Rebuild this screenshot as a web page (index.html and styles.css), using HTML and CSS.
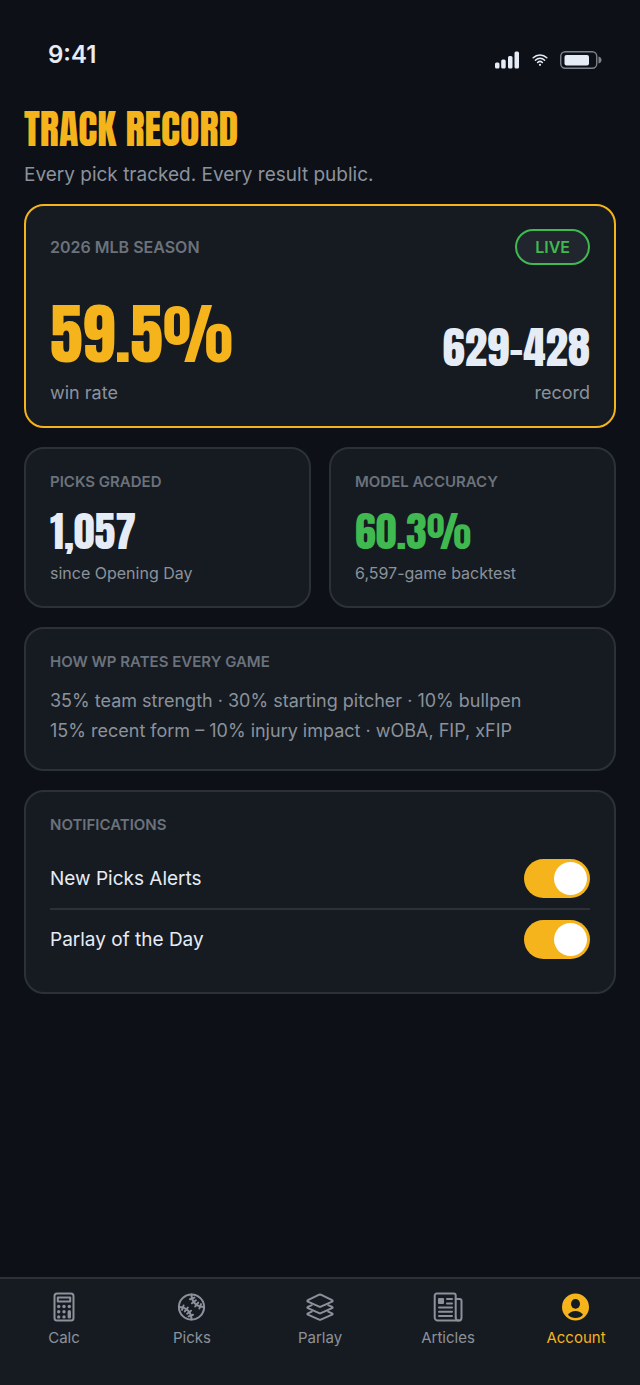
FILE: index.html
```html
<!DOCTYPE html>
<html lang="en">
<head>
    <meta charset="UTF-8">
    <meta name="viewport" content="width=device-width, initial-scale=1.0">
    <title>Track Record</title>
    <link rel="stylesheet" href="styles.css">
</head>
<body>

    <!-- Status bar -->
    <div class="status-bar">
        <span class="time">9:41</span>
        <div class="status-icons">
            <svg class="signal" viewBox="0 0 26 18" fill="currentColor" aria-hidden="true">
                <rect x="1" y="11.500" width="4.500" height="6" rx="1.500"/>
                <rect x="7.200" y="8.500" width="4.500" height="9" rx="1.500"/>
                <rect x="14" y="5" width="4.500" height="12.500" rx="1.500"/>
                <rect x="20.500" y="0.500" width="4.500" height="17" rx="1.500"/>
            </svg>
            <svg class="wifi" viewBox="0 0 16 14" fill="none" stroke="currentColor" stroke-width="1.5" stroke-linecap="round" aria-hidden="true">
                <path d="M1.2 4.7C5 1 11 1 14.8 4.7"/>
                <path d="M3.4 7.2C6 4.7 10 4.7 12.6 7.2"/>
                <path d="M5.6 9.5C7 8.2 9 8.2 10.4 9.5"/>
                <circle cx="8" cy="11.8" r="1.1" fill="currentColor" stroke="none"/>
            </svg>
            <svg class="battery" viewBox="0 0 42 18" aria-hidden="true">
                <rect x="0.75" y="0.75" width="36" height="16.5" rx="4.5" fill="none" stroke="#7d828b" stroke-width="1.4"/>
                <rect x="4.500" y="4" width="24.500" height="10.500" rx="2" fill="currentColor"/>
                <path d="M38.500 5.500c4 .8 4 6.200 0 7z" fill="#7d828b"/>
            </svg>
        </div>
    </div>

    <main class="content">
        <header>
            <h1>TRACK RECORD</h1>
            <p class="subtitle">Every pick tracked. Every result public.</p>
        </header>

        <section class="card card-hero">
            <div class="hero-top">
                <h2 class="season">2026 MLB SEASON</h2>
                <span class="live-pill">LIVE</span>
            </div>
            <div class="hero-stats">
                <div>
                    <div class="win-rate">59.5%</div>
                    <p class="caption">win rate</p>
                </div>
                <div class="hero-right">
                    <div class="record">629-428</div>
                    <p class="caption">record</p>
                </div>
            </div>
        </section>

        <div class="stat-grid">
            <section class="card">
                <h2 class="label">PICKS GRADED</h2>
                <div class="stat-value">1,057</div>
                <p class="stat-note">since Opening Day</p>
            </section>
            <section class="card">
                <h2 class="label">MODEL ACCURACY</h2>
                <div class="stat-value green">60.3%</div>
                <p class="stat-note">6,597-game backtest</p>
            </section>
        </div>

        <section class="card">
            <h2 class="label">HOW WP RATES EVERY GAME</h2>
            <p class="factors">
                35% team strength · 30% starting pitcher · 10% bullpen<br>
                15% recent form – 10% injury impact · wOBA, FIP, xFIP
            </p>
        </section>

        <section class="card">
            <h2 class="label">NOTIFICATIONS</h2>
            <div class="setting">
                <label for="new-picks">New Picks Alerts</label>
                <input type="checkbox" class="toggle" id="new-picks" checked>
            </div>
            <div class="setting">
                <label for="parlay-day">Parlay of the Day</label>
                <input type="checkbox" class="toggle" id="parlay-day" checked>
            </div>
        </section>
    </main>

    <!-- Bottom tabs -->
    <nav class="tab-bar">
        <a href="#calc" class="tab">
            <svg viewBox="0 0 30 30" fill="none" stroke="currentColor" stroke-width="2" stroke-linejoin="round" aria-hidden="true">
                <rect x="5.500" y="1.500" width="19" height="27" rx="2.500"/>
                <rect x="8.800" y="5.500" width="12.400" height="4"/>
                <g fill="currentColor" stroke="none">
                    <circle cx="9.700" cy="14.500" r="1.700"/>
                    <circle cx="15" cy="14.500" r="1.700"/>
                    <circle cx="20.300" cy="14.500" r="1.700"/>
                    <circle cx="9.700" cy="19.700" r="1.700"/>
                    <circle cx="15" cy="19.700" r="1.700"/>
                    <circle cx="9.700" cy="24.900" r="1.700"/>
                    <circle cx="15" cy="24.900" r="1.700"/>
                    <rect x="18.600" y="18" width="3.400" height="8.600" rx="1.700"/>
                </g>
            </svg>
            <span>Calc</span>
        </a>
        <a href="#picks" class="tab">
            <svg viewBox="0 0 30 30" fill="none" stroke="currentColor" stroke-width="2" stroke-linecap="round" aria-hidden="true">
                <circle cx="14.500" cy="15" r="12.600"/>
                <path d="M14.500 2.400C14.500 9.800 19.700 15 27.100 15"/>
                <path d="M1.900 15C9.300 15 14.500 20.200 14.500 27.600"/>
                <path d="M13 7.200l4.400-1.600M15 11.300l3.900-3M18.200 14.500l3-3.900M22.400 16.500l1.600-4.400"/>
                <path d="M5 17.900l1.600-4.400M7.800 19.400l3-3.900M10.100 21.700l3.900-3M11.600 24.400l4.400-1.600"/>
            </svg>
            <span>Picks</span>
        </a>
        <a href="#parlay" class="tab">
            <svg viewBox="0 0 30 30" fill="none" stroke="currentColor" stroke-width="2" stroke-linejoin="round" stroke-linecap="round" aria-hidden="true">
                <path d="M14.200 2.700L2.900 8.200c-.7.400-.7 1 0 1.400l11.300 5.100c.5.200 1.100.2 1.600 0l11.300-5.100c.7-.4.700-1 0-1.400L15.800 2.700c-.5-.2-1.100-.2-1.600 0z"/>
                <path d="M6.800 13.200l-3.900 1.700c-.7.300-.7 1 0 1.300l11.300 5c.5.200 1.100.2 1.600 0l11.300-5c.7-.3.700-1 0-1.300l-3.900-1.700"/>
                <path d="M6.800 19.600l-3.900 1.700c-.7.300-.7 1 0 1.300l11.300 5c.5.200 1.100.2 1.600 0l11.300-5c.7-.3.700-1 0-1.300l-3.900-1.700"/>
            </svg>
            <span>Parlay</span>
        </a>
        <a href="#articles" class="tab">
            <svg viewBox="0 0 30 30" fill="none" stroke="currentColor" stroke-width="2" stroke-linejoin="round" stroke-linecap="round" aria-hidden="true">
                <path d="M22.700 25.500V3.500a2 2 0 0 0-2-2H3.700a2 2 0 0 0-2 2v22a3 3 0 0 0 3 3h21"/>
                <path d="M22.700 7h3.800a2 2 0 0 1 2 2v16.700a2.800 2.800 0 0 1-5.800 0"/>
                <path d="M14 7h5M14 11.500h5M6 15.500h13M6 19.700h13M6 24h13"/>
                <rect x="5" y="6" width="6" height="6" rx="1" fill="currentColor" stroke="none"/>
            </svg>
            <span>Articles</span>
        </a>
        <a href="#account" class="tab active" aria-current="page">
            <svg viewBox="0 0 30 30" aria-hidden="true">
                <circle cx="14.500" cy="15" r="13.500" fill="currentColor"/>
                <ellipse cx="14.500" cy="11.900" rx="4.500" ry="4.800" fill="#161b21"/>
                <path d="M7 22.800C8.500 20.200 11.400 18.900 14.500 18.900S20.500 20.200 22 22.800C20 25 17.400 26 14.500 26S9 25 7 22.800z" fill="#161b21"/>
            </svg>
            <span>Account</span>
        </a>
    </nav>

</body>
</html>
```

FILE: styles.css
```css
* {
    margin: 0;
    padding: 0;
    box-sizing: border-box;
}

:root {
    --bg: #0d1017;
    --card: #161b21;
    --border: #2c3138;
    --gold: #f5b31c;
    --green: #3fb950;
    --text: #e6ecf5;
    --muted: #8b929c;
    --dim: #6b727c;
    --display: Anton, "Liberation Sans Narrow", sans-serif;
}

body {
    font-family: Inter, sans-serif;
    background: var(--bg);
    color: var(--text);
    min-height: 100vh;
    display: flex;
    flex-direction: column;
}

/* Status bar */
.status-bar {
    display: flex;
    justify-content: space-between;
    align-items: center;
    padding: 40px 38px 0 48px;
}

.time {
    font-size: 24px;
    line-height: 30px;
    font-weight: 600;
}

.status-icons {
    display: flex;
    align-items: center;
    gap: 12px;
    padding-top: 10px;
}

.signal { width: 26px; height: 18px; }
.wifi { width: 16px; height: 14px; }
.battery { width: 42px; height: 18px; }

/* Content */
.content {
    flex: 1;
    padding: 34px 24px 24px;
    display: flex;
    flex-direction: column;
    gap: 19px;
}

h1 {
    font-family: var(--display);
    font-size: 40px;
    line-height: 50px;
    font-weight: 400;
    color: var(--gold);
}

.subtitle {
    font-size: 19px;
    line-height: 24px;
    margin-top: 9px;
    margin-bottom: -2px;
    color: var(--muted);
}

.card {
    background: var(--card);
    border: 2px solid var(--border);
    border-radius: 20px;
    padding: 23px 24px;
}

.card-hero {
    border-color: var(--gold);
}

.hero-top,
.hero-stats {
    display: flex;
    justify-content: space-between;
}

.hero-top {
    align-items: center;
}

.season {
    font-size: 16px;
    line-height: 24px;
    font-weight: 600;
    color: var(--dim);
}

.live-pill {
    font-size: 16px;
    line-height: 32px;
    font-weight: 600;
    color: var(--green);
    background: #21252d;
    border: 2px solid var(--green);
    border-radius: 18px;
    padding: 0 18px;
}

.hero-stats {
    align-items: flex-end;
    margin-top: 24px;
}

.hero-right {
    text-align: right;
}

.win-rate,
.record,
.stat-value {
    font-family: var(--display);
    font-weight: 400;
}

.win-rate {
    font-size: 66px;
    line-height: 90px;
    margin-bottom: 4px;
    color: var(--gold);
}

.record {
    font-size: 45px;
    line-height: 64px;
    margin-bottom: 4px;
}

.caption {
    font-size: 18px;
    line-height: 20px;
    color: var(--muted);
}

.stat-grid {
    display: grid;
    grid-template-columns: 1fr 1fr;
    gap: 18px;
}

.label {
    font-size: 15px;
    line-height: 20px;
    font-weight: 600;
    color: var(--dim);
    margin-bottom: 14px;
}

.stat-value {
    font-size: 42px;
    line-height: 52px;
    margin-bottom: 5px;
}

.green {
    color: var(--green);
}

.stat-note {
    font-size: 16px;
    line-height: 20px;
    color: var(--muted);
}

.factors {
    font-size: 18px;
    line-height: 30px;
    color: var(--muted);
}

/* Notification settings */
.setting {
    display: flex;
    justify-content: space-between;
    align-items: center;
    padding: 10px 0;
    font-size: 19px;
}

.setting + .setting {
    border-top: 2px solid var(--border);
}

.toggle {
    appearance: none;
    width: 66px;
    height: 39px;
    padding: 3px;
    border-radius: 20px;
    background: #3a4049;
    display: flex;
    cursor: pointer;
}

.toggle::before {
    content: '';
    width: 33px;
    height: 33px;
    border-radius: 50%;
    background: #fff;
}

.toggle:checked {
    background: var(--gold);
    justify-content: flex-end;
}

/* Bottom tabs */
.tab-bar {
    display: flex;
    background: var(--card);
    border-top: 2px solid var(--border);
    padding: 13px 0 37px;
}

.tab {
    flex: 1;
    display: flex;
    flex-direction: column;
    align-items: center;
    gap: 6px;
    color: var(--muted);
    font-size: 15px;
    line-height: 20px;
    text-decoration: none;
}

.tab svg {
    width: 30px;
    height: 30px;
}

.tab.active {
    color: var(--gold);
}
```
